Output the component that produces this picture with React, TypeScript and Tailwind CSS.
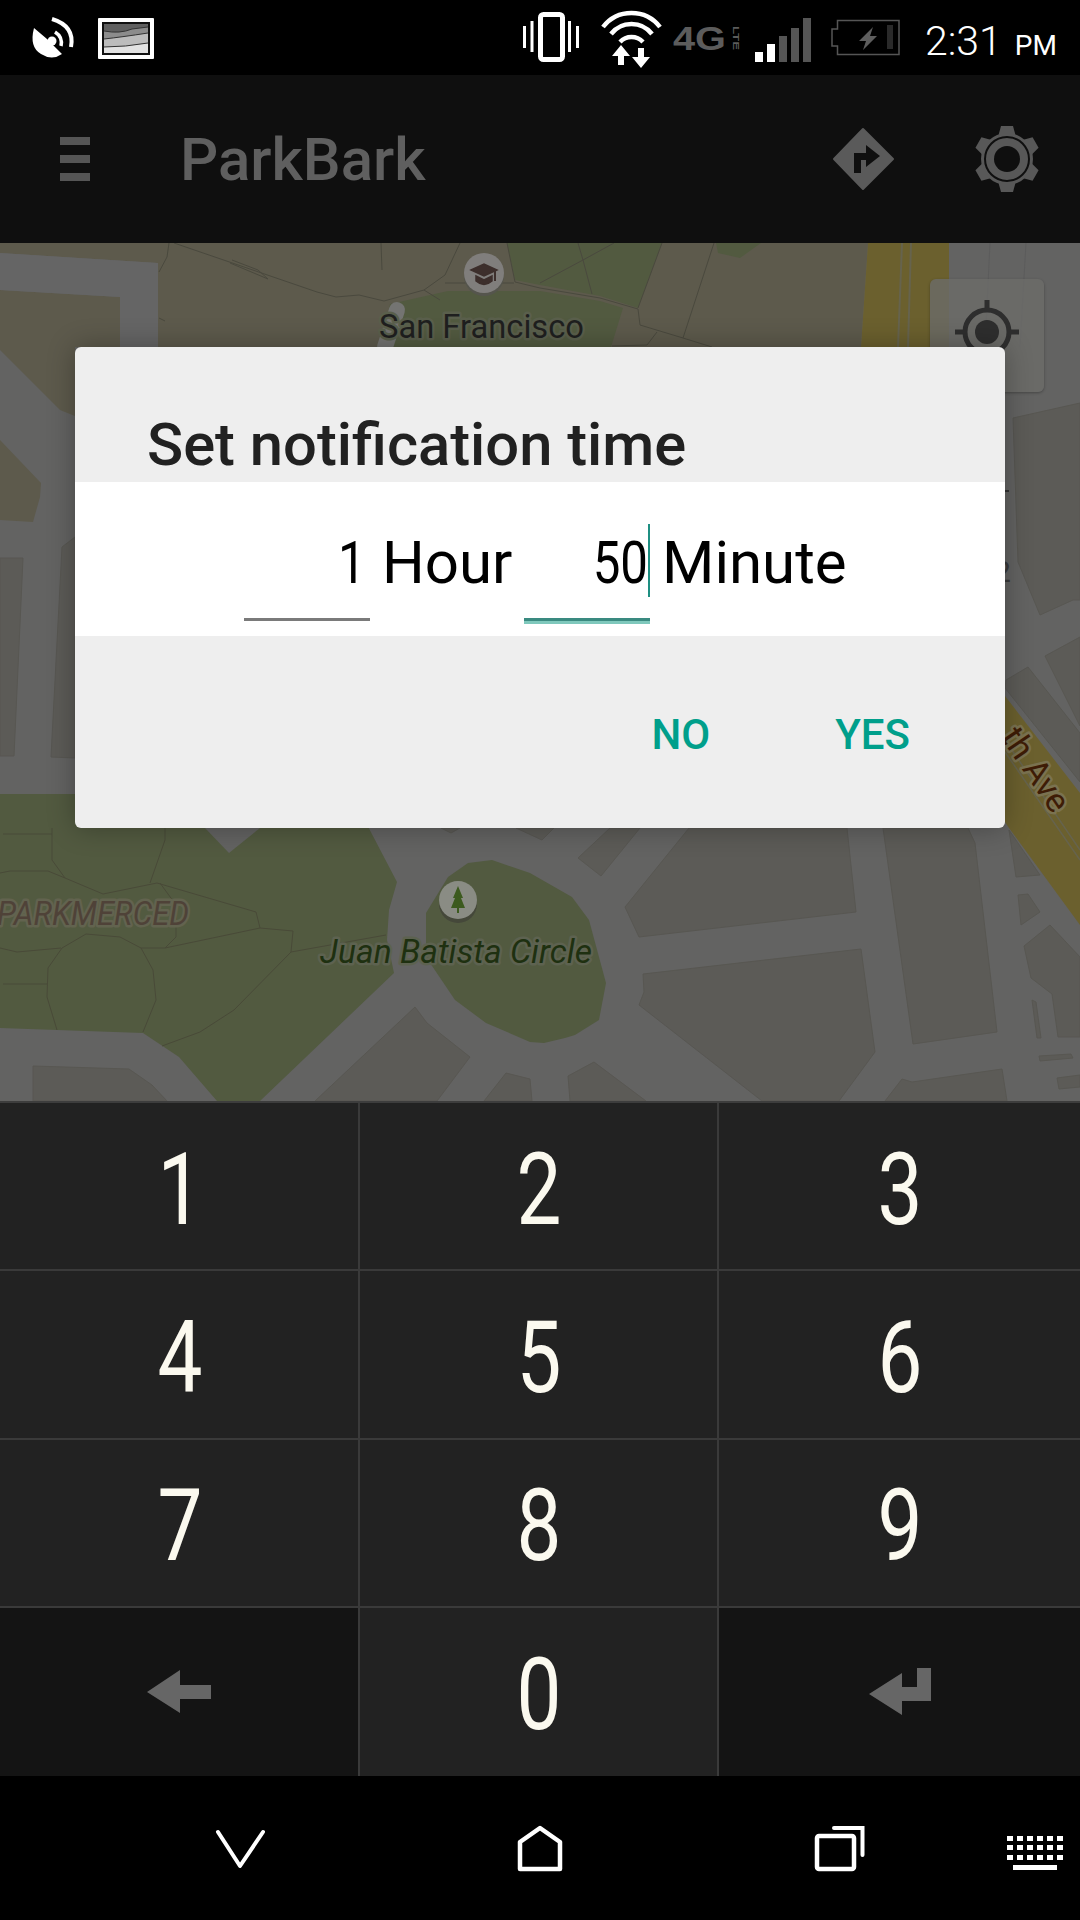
const digits = ["1", "2", "3", "4", "5", "6", "7", "8", "9"];

function StatusBar() {
  return (
    <div className="h-[75px] bg-black shrink-0">
      <svg viewBox="0 0 1080 75" className="block w-full h-full">
        {/* dish */}
        <path d="M34 28 Q29 47 41 54 Q52 61 62 54 L47 39 Z" fill="#fff" />
        <circle cx="52" cy="41" r="4.5" fill="#fff" />
        <path d="M55 32 Q63 37 61 46" stroke="#fff" strokeWidth="3.5" fill="none" />
        <path d="M52 19 Q75 26 71 47" stroke="#fff" strokeWidth="4" fill="none" />
        {/* picture thumbnail */}
        <rect x="98" y="18" width="56" height="41" rx="1" fill="#fff" />
        <rect x="102" y="22" width="48" height="33" fill="#111" />
        <rect x="104" y="24" width="44" height="29" fill="#606060" />
        <path d="M104 31 Q120 34 132 29 L148 27 V53 H104 Z" fill="#8c8c8c" />
        <path d="M104 39 Q122 37 148 33 V53 H104 Z" fill="#bcbcbc" />
        <path d="M104 47 Q125 47 148 43 V53 H104 Z" fill="#e2e2e2" />
        <path d="M104 39 Q122 37 148 33 M104 47 Q125 47 148 43 M104 31 Q120 34 132 29 L148 27" stroke="#333" strokeWidth="1" fill="none" />
        {/* vibrate */}
        <rect x="540.5" y="14.5" width="22" height="45" rx="3" stroke="#fff" strokeWidth="5" fill="none" />
        <path d="M524.5 26 V48 M532 21 V52 M569.5 21 V52 M577.5 26 V48" stroke="#fff" strokeWidth="3" />
        {/* wifi */}
        <path d="M603 27 A36 36 0 0 1 660 27" stroke="#fff" strokeWidth="4.5" fill="none" />
        <path d="M611 34 A26 26 0 0 1 652 34" stroke="#fff" strokeWidth="4.5" fill="none" />
        <path d="M620 42 A16 16 0 0 1 643 42" stroke="#fff" strokeWidth="4.5" fill="none" />
        <path d="M621 45 L630 56 H624 V65 H618 V56 H612 Z" fill="#fff" />
        <path d="M641 68 L650 57 H644 V48 H638 V57 H632 Z" fill="#fff" />
        {/* 4G LTE */}
        <text x="673" y="50" fontFamily="Liberation Sans, sans-serif" fontWeight="700" fontSize="33" fill="#5c5c5c" textLength="53" lengthAdjust="spacingAndGlyphs">4G</text>
        <text transform="translate(733 26) rotate(90)" fontFamily="Liberation Sans, sans-serif" fontWeight="700" fontSize="9" fill="#5c5c5c" textLength="24" lengthAdjust="spacingAndGlyphs">LTE</text>
        {/* signal */}
        <rect x="755" y="52" width="8" height="10" fill="#fff" />
        <rect x="767" y="44" width="8" height="18" fill="#fff" />
        <rect x="779" y="36" width="8" height="26" fill="#555" />
        <rect x="791" y="28" width="8" height="34" fill="#555" />
        <rect x="803" y="18" width="8" height="44" fill="#555" />
        {/* battery */}
        <path d="M837.5 20.5 H899 V54.5 H837.5 V46 H832 V29 H837.5 Z" stroke="#555" strokeWidth="1.5" fill="none" />
        <path d="M873 27 L859 41 H866 L863 50 L877 36 H870 Z" fill="#5e5e5e" />
        <rect x="887" y="25" width="6" height="24" fill="#2a2a2a" />
      </svg>
    </div>
  );
}

function AppBar() {
  return (
    <div className="relative h-[168px] shrink-0 bg-[#0f0f0f] flex items-center pl-[60px]">
      <div className="flex flex-col gap-[10px] w-[30px]">
        <div className="h-[8px] bg-[#555]" />
        <div className="h-[8px] bg-[#555]" />
        <div className="h-[8px] bg-[#555]" />
      </div>
      <div className="ml-[90px] mt-[2px] text-[60px] leading-none font-medium text-[#5f5f5f]">ParkBark</div>
      <svg viewBox="0 0 70 70" className="ml-auto w-[70px] h-[70px]">
        <path d="M35 5 L65 35 L35 65 L6 35 Z" fill="#5a5a5a" strokeLinejoin="round" stroke="#5a5a5a" strokeWidth="2" />
        <path d="M26 49 V29 H38 V21 L52 32 L38 43 V36 H33 V49 Z" fill="#0f0f0f" />
      </svg>
      <svg viewBox="-36 -36 72 72" className="ml-[73px] mr-[37px] w-[72px] h-[72px]">
        <g fill="#585858">
          <circle r="26" />
          {[0, 60, 120, 180, 240, 300].map((a) => (
            <path key={a} d="M-9 -22 L-6 -33 H6 L9 -22 Z" transform={`rotate(${a})`} />
          ))}
        </g>
        <circle r="22" fill="none" stroke="#0f0f0f" strokeWidth="2" />
        <circle r="13" fill="#0f0f0f" />
      </svg>
    </div>
  );
}

function MapCanvas() {
  const blocks = [
    "625,907 689,828 847,828 856,912 639,937",
    "643,974 861,949 875,1052 839,1101 762,1101 639,1005 644,992",
    "883,828 968,828 975,843 997,1032 913,1044",
    "415,1007 427,1023 470,1057 437,1101 315,1101",
    "506,1073 530,1079 532,1101 484,1101",
    "594,1062 646,1101 570,1101 568,1076",
    "33,1066 129,1069 152,1085 167,1101 33,1101",
    "885,1101 902,1079 912,1082 1002,1069 1007,1101",
    "441,828 451,833 460,828",
    "516,828 542,840 554,828",
    "610,828 578,858 601,876 640,828",
    "1009,830 1040,875 1016,877",
    "1018,895 1028,894 1040,912 1021,925",
    "1050,925 1080,957 1080,1037 1058,1037 1052,994 1031,978 1024,946",
    "1032,1000 1036,1002 1041,1038 1037,1038",
    "1039,1056 1071,1054 1073,1058 1040,1061",
    "1057,1078 1080,1075 1080,1087 1059,1089",
    "0,558 23,558 14,756 0,756",
    "62,547 75,537 75,758 51,757",
    "1013,418 1080,403 1080,600 1073,600 1040,615 1018,562",
    "1045,656 1080,637 1080,726",
    "1006,680 1028,667 1080,733 1080,782 1005,688",
  ];
  const thin = [
    "174,243 317,292 336,297 359,295 384,301 424,290 445,275 460,243",
    "169,243 167,257 159,272",
    "381,243 382,270",
    "424,290 440,300",
    "445,283 514,283",
    "507,243 515,282 540,288 600,298 638,309 640,325 683,338 712,347",
    "578,243 583,260 592,294",
    "614,243 583,260 540,283",
    "662,243 638,308",
    "714,243 683,338",
    "657,332 647,345 612,346",
    "230,263 268,279 258,270 232,260",
    "159,318 165,321",
  ];
  const parkLines = [
    "52,828 52,860 65,878 103,894 157,883 256,912 260,928 293,931 291,952 386,935",
    "165,828 165,840 150,883",
    "3,834 52,834",
    "0,873 10,871 48,871 65,878",
    "260,928 165,948 141,948 120,937 86,934 62,948 48,968 47,997 57,1030",
    "141,948 153,970 156,1000 143,1032",
    "160,883 176,905 176,937 165,948",
    "61,948 17,952 0,948",
    "3,984 47,984",
    "291,952 234,1010 200,1032 162,1046",
  ];
  return (
    <svg viewBox="0 243 1080 858" className="block w-full h-full">
      <rect x="0" y="243" width="1080" height="858" fill="#636362" />
      {/* tan ground up top */}
      <polygon points="158,243 868,243 861,347 158,347" fill="#5d5a4c" />
      <polygon points="0,243 175,243 158,263 0,253" fill="#5d5a4c" />
      <polygon points="0,290 120,297 120,347 75,347 75,416 60,410 0,350" fill="#5d5a4c" />
      <polygon points="0,440 41,483 40,497 33,522 0,520" fill="#5d5a4c" />
      <polygon points="0,253 158,263 158,347 120,347 120,297 0,290" fill="#656565" />
      {/* parks */}
      <polygon points="507,243 662,243 638,308 600,296 540,285 515,280" fill="#525a40" />
      <polygon points="716,243 761,243 740,258 718,253" fill="#525a40" />
      <polygon points="390,304 448,291 540,291 600,301 623,308 611,347 380,347" fill="#525a40" />
      <polygon points="0,794 351,794 397,882 389,910 387,940 394,973 260,1101 217,1101 179,1057 143,1033 0,1028" fill="#525a40" />
      <polygon points="205,828 229,853 260,828" fill="#636362" />
      <polygon points="492,860 530,873 572,897 589,920 606,983 599,1020 575,1035 565,1038 544,1043 530,1042 486,1023 455,1000 426,957 426,913 448,877 468,863" fill="#525a40" />
      {/* yellow arterial */}
      <polygon points="868,243 949,243 949,347 861,347" fill="#6b602e" />
      <path d="M902 243 L898 347 M911 243 L908 347" stroke="#66634d" strokeWidth="2" fill="none" />
      <polygon points="1005,696 1080,793 1080,925 1009,828 1005,822" fill="#6b602e" />
      <path d="M1005 740 L1080 850 M1005 752 L1080 860" stroke="#66634d" strokeWidth="1.5" fill="none" />
      {/* lighter lanes on the right */}
      <path d="M990 243 L985 347 M1026 243 L1020 347" stroke="#5c5c5c" strokeWidth="1" fill="none" />
      {blocks.map((p) => (
        <polygon key={p} points={p} fill="#5c5b57" stroke="#585752" strokeWidth="1" />
      ))}
      {thin.map((p) => (
        <polyline key={p} points={p} fill="none" stroke="#4a493e" strokeWidth="1" />
      ))}
      {parkLines.map((p) => (
        <polyline key={p} points={p} fill="none" stroke="#494a38" strokeWidth="1" />
      ))}
      <path d="M397 310 L385 347" stroke="#747472" strokeWidth="16" strokeLinecap="round" />
      {/* school pin */}
      <circle cx="484" cy="276" r="20" fill="#55554d" />
      <circle cx="484" cy="273" r="20" fill="#807e7c" />
      <path d="M471 270 L484 264 L497 270 L484 276 Z M476 276 L484 280 L492 276 V281 Q484 288 476 281 Z" fill="#3d2f2c" stroke="#3d2f2c" strokeWidth="1.5" />
      <path d="M495 270 V281" stroke="#3d2f2c" strokeWidth="2" />
      {/* tree pin */}
      <circle cx="458" cy="904" r="19" fill="#45483a" />
      <circle cx="458" cy="900" r="19" fill="#8a8c84" />
      <path d="M458 886 L463 898 H461 L465 908 H459 V913 H457 V908 H451 L455 898 H453 Z" fill="#3c5a1e" />
      <g fontFamily="Roboto, sans-serif" className="[paint-order:stroke]" strokeLinejoin="round">
        <text x="379" y="338" fontSize="34" fill="#1f1f1f" stroke="#5a5f4c" strokeWidth="5" textLength="205" lengthAdjust="spacingAndGlyphs">San Francisco</text>
        <text x="-3" y="925" fontSize="34" fontStyle="italic" fill="#4f4238" stroke="#62634f" strokeWidth="5" textLength="192" lengthAdjust="spacingAndGlyphs">PARKMERCED</text>
        <text x="320" y="963" fontSize="34" fontStyle="italic" fill="#1e3010" stroke="#5d6250" strokeWidth="5" textLength="272" lengthAdjust="spacingAndGlyphs">Juan Batista Circle</text>
        <text transform="translate(1000 737) rotate(56)" fontSize="34" fill="#3e1c06" stroke="#7a7250" strokeWidth="5">th Ave</text>
        <text x="994" y="582" fontSize="30" fill="#3a3a3a">2</text>
      </g>
      <path d="M1000 491 H1009" stroke="#333" strokeWidth="2" />
    </svg>
  );
}

function Dialog() {
  return (
    <div className="absolute left-[75px] top-[104px] w-[930px] h-[481px] flex flex-col rounded-[6px] overflow-hidden bg-[#eeeeee] shadow-[0_0_28px_rgba(0,0,0,0.3)]">
      <div className="h-[135px] pl-[72px] pb-[5px] flex items-end">
        <div className="text-[59.7px] leading-[64px] font-medium text-[#212121]">Set notification time</div>
      </div>
      <div className="h-[154px] bg-white pl-[169px] flex items-start text-[60px] leading-none text-black">
        <div className="mt-[33px] w-[126px] h-[106px] flex justify-end border-b-[3px] border-[#7a7a7a] pr-[4px]">
          <span className="mt-[13px] h-[70px] flex items-center scale-x-[0.82] origin-right">1</span>
        </div>
        <span className="mt-[46px] h-[70px] flex items-center ml-[12px] w-[142px]">Hour</span>
        <div className="mt-[33px] w-[126px] h-[106px] flex justify-end relative">
          <span className="mt-[13px] h-[70px] flex items-center pr-[3px] scale-x-[0.82] origin-right">50</span>
          <div className="absolute right-0 top-[9px] h-[73px] w-[2px] bg-[#1f8f82]" />
          <div className="absolute left-0 right-0 top-[103px] h-[3px] bg-[#3a8a80]" />
          <div className="absolute left-0 right-0 top-[106px] h-[3px] bg-[#7fc8bc]" />
        </div>
        <span className="mt-[46px] h-[70px] flex items-center ml-[12px]">Minute</span>
      </div>
      <div className="flex-1 flex justify-end items-start pr-[95px] pt-[78px] text-[42px] leading-none font-medium text-[#009f8b]">
        <span>NO</span>
        <span className="ml-[125px]">YES</span>
      </div>
    </div>
  );
}

function KeyDigit({ value }: { value: string }) {
  return <span className="inline-block text-[100px] leading-none scale-x-[0.8] text-[#fbf9ef]">{value}</span>;
}

function Keypad() {
  return (
    <div className="h-[675px] shrink-0 border-t-2 border-[#3d3d3d] grid grid-cols-[360px_359px_361px] grid-rows-4 bg-[#222222]">
      {digits.map((d, i) => (
        <div key={d} className={`flex items-center justify-center pt-[7px] pl-[2px] border-b-2 border-[#3a3a3a] ${i % 3 === 2 ? "" : "border-r-2"}`}>
          <KeyDigit value={d} />
        </div>
      ))}
      <div className="flex items-center justify-center bg-[#141414] border-r-2 border-[#3a3a3a]">
        <svg viewBox="0 0 64 43" className="w-[64px] h-[43px]">
          <path d="M0 22 L33 0 V15 H64 V29 H33 V43 Z" fill="#666" />
        </svg>
      </div>
      <div className="flex items-center justify-center pt-[7px] pl-[2px] border-r-2 border-[#3a3a3a]">
        <KeyDigit value="0" />
      </div>
      <div className="flex items-center justify-center bg-[#141414]">
        <svg viewBox="0 0 62 47" className="w-[62px] h-[47px]">
          <path d="M0 26 L33 5 V19 H48 V0 H62 V33 H33 V47 Z" fill="#666" />
        </svg>
      </div>
    </div>
  );
}

function NavBar() {
  return (
    <div className="flex-1 bg-black">
      <svg viewBox="0 1776 1080 144" className="block w-full h-full" fill="none" stroke="#fff">
        <path d="M218 1832 L240 1866 L263 1832" strokeWidth="4" strokeLinecap="round" strokeLinejoin="round" />
        <path d="M520 1869 V1842 L540 1828 L560 1842 V1869 Z" strokeWidth="4.5" strokeLinejoin="round" />
        <rect x="817" y="1836" width="37" height="33" rx="2" strokeWidth="4.5" />
        <path d="M834 1828 H862.5 V1855" strokeWidth="4" strokeLinecap="round" />
        <g fill="#fff" stroke="none">
          {[1836, 1845, 1855].map((y) =>
            [1007, 1017, 1027, 1037, 1047, 1057].map((x) => (
              <rect key={`${x}-${y}`} x={x} y={y} width="6" height="5" />
            )),
          )}
          <rect x="1013" y="1865" width="44" height="5" />
        </g>
      </svg>
    </div>
  );
}

export default function App() {
  return (
    <div className="relative w-[1080px] h-[1920px] flex flex-col overflow-hidden font-[Roboto,sans-serif]">
      <StatusBar />
      <AppBar />
      <div className="relative h-[858px] shrink-0">
        <MapCanvas />
        <div className="absolute left-[930px] top-[36px] w-[114px] h-[113px] rounded-[6px] bg-[#6c6c69]/80 shadow-[0_1px_3px_rgba(0,0,0,0.3)]">
          <svg viewBox="-57 -53 114 113" className="block w-full h-full" stroke="#2e2e2e" fill="none">
            <circle r="22" strokeWidth="5" />
            <circle r="12" fill="#2e2e2e" stroke="none" />
            <path d="M0 -32 V-22 M0 32 V22 M-32 0 H-22 M32 0 H22" strokeWidth="5" />
          </svg>
        </div>
        <Dialog />
      </div>
      <Keypad />
      <NavBar />
      {/* status clock over the bar */}
      <div className="absolute left-[925px] top-[17px] flex items-baseline text-white font-light">
        <span className="text-[41px] leading-[48px]">2:31</span>
        <span className="ml-[13px] text-[28px] leading-none font-normal">PM</span>
      </div>
    </div>
  );
}
